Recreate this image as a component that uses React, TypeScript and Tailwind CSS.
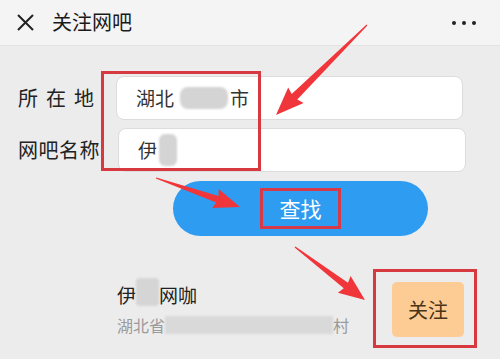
import React from "react";

type P = [number, number];

function arrowPoints(tail: P, tip: P, headLen: number, headW: number, shaftW: number): string {
  const dx = tip[0] - tail[0];
  const dy = tip[1] - tail[1];
  const len = Math.hypot(dx, dy);
  const ux = dx / len;
  const uy = dy / len;
  const nx = -uy;
  const ny = ux;
  const bx = tip[0] - ux * headLen;
  const by = tip[1] - uy * headLen;
  const pts: P[] = [
    [tail[0] + nx * 0.6, tail[1] + ny * 0.6],
    [bx + nx * shaftW / 2, by + ny * shaftW / 2],
    [bx + nx * headW / 2 - ux * 2, by + ny * headW / 2 - uy * 2],
    tip,
    [bx - nx * headW / 2 - ux * 2, by - ny * headW / 2 - uy * 2],
    [bx - nx * shaftW / 2, by - ny * shaftW / 2],
    [tail[0] - nx * 0.6, tail[1] - ny * 0.6],
  ];
  return pts.map((p) => `${p[0].toFixed(1)},${p[1].toFixed(1)}`).join(" ");
}

export default function App() {
  return (
    <div className="relative w-[500px] h-[359px] overflow-hidden bg-[#ececec] font-['Noto_Sans_CJK_SC','Noto_Sans',sans-serif]">
      {/* Header */}
      <div className="h-[46px] bg-[#f4f4f4] border-b border-[#e3e3e3] flex items-center">
        <svg className="ml-[17px]" width="17" height="17" viewBox="0 0 17 17">
          <path d="M1 1 L16 16 M16 1 L1 16" stroke="#222" strokeWidth="2" />
        </svg>
        <span className="ml-[18px] text-[20px] leading-none text-[#1a1a1a] -mt-[2px]">关注网吧</span>
        <div className="ml-auto mr-[24px] flex gap-[6px]">
          <span className="w-[4px] h-[4px] rounded-full bg-[#222]" />
          <span className="w-[4px] h-[4px] rounded-full bg-[#222]" />
          <span className="w-[4px] h-[4px] rounded-full bg-[#222]" />
        </div>
      </div>

      {/* Form */}
      <div className="pt-[30px] flex flex-col">
        <div className="flex items-center h-[44px]">
          <div className="w-[116px] pl-[18px] flex gap-[8px] text-[20px] leading-none text-[#222]">
            <span>所</span>
            <span>在</span>
            <span>地</span>
          </div>
          <div className="w-[347px] h-[44px] bg-white rounded-[8px] border border-[#dcdcdc] flex items-center pl-[19px] text-[19px] text-[#333]">
            <span>湖北</span>
            <span className="ml-[6px] w-[48px] h-[22px] rounded-[8px] bg-[#d4d4d4] blur-[1px]" />
            <span className="ml-[2px]">市</span>
          </div>
        </div>
        <div className="flex items-center h-[44px] mt-[8px]">
          <div className="w-[118px] pl-[18px] text-[20px] leading-none text-[#222] tracking-[0.5px]">网吧名称</div>
          <div className="w-[348px] h-[44px] bg-white rounded-[8px] border border-[#dcdcdc] flex items-center pl-[19px] text-[19px] text-[#333]">
            <span>伊</span>
            <span className="ml-[2px] w-[18px] h-[32px] rounded-[6px] bg-[#d4d4d4] blur-[1px]" />
          </div>
        </div>

        {/* Search button */}
        <div className="ml-[173px] mt-[9px] w-[255px] h-[55px] rounded-full bg-[#2e9cf1] flex items-center justify-center">
          <span className="w-[81px] h-[41px] border-[3px] border-[#d63a48] flex items-center justify-center text-white text-[21px] leading-none">
            查找
          </span>
        </div>

        {/* Result */}
        <div className="mt-[33px] flex items-center justify-between pl-[117px] pr-[23px]">
          <div className="flex flex-col mb-[6px]">
            <div className="flex items-end text-[19px] leading-none text-[#222] h-[28px]">
              <span className="pb-[2px]">伊</span>
              <span className="w-[23px] h-[28px] rounded-[4px] bg-[#d5d5d5] blur-[1px]" />
              <span className="pb-[2px]">网咖</span>
            </div>
            <div className="mt-[10px] flex items-center text-[16px] leading-none text-[#9a9a9a]">
              <span>湖北省</span>
              <span className="w-[168px] h-[18px] bg-[#d9d9d9] blur-[1px]" />
              <span>村</span>
            </div>
          </div>
          <div className="border-[3px] border-[#d63a40] pl-[16px] pr-[10px] pt-[10px] pb-[8px]">
            <div className="w-[72px] h-[55px] rounded-[5px] bg-[#fdcc95] flex items-center justify-center text-[20px] text-[#4a3418] leading-none">
              关注
            </div>
          </div>
        </div>
      </div>

      {/* Red box overlay around inputs */}
      <div className="absolute left-[101px] top-[71px] w-[160px] h-[100px] border-[3px] border-[#d63a40] pointer-events-none" />

      {/* Arrows */}
      <svg className="absolute left-0 top-0 pointer-events-none" width="500" height="359" viewBox="0 0 500 359">
        <polygon points={arrowPoints([367, 25], [276, 115], 26, 22, 8)} fill="#f0363a" />
        <polygon points={arrowPoints([156, 178], [240, 207], 24, 20, 7)} fill="#f0363a" />
        <polygon points={arrowPoints([295, 247], [365, 300], 24, 21, 7)} fill="#f0363a" />
      </svg>
    </div>
  );
}
